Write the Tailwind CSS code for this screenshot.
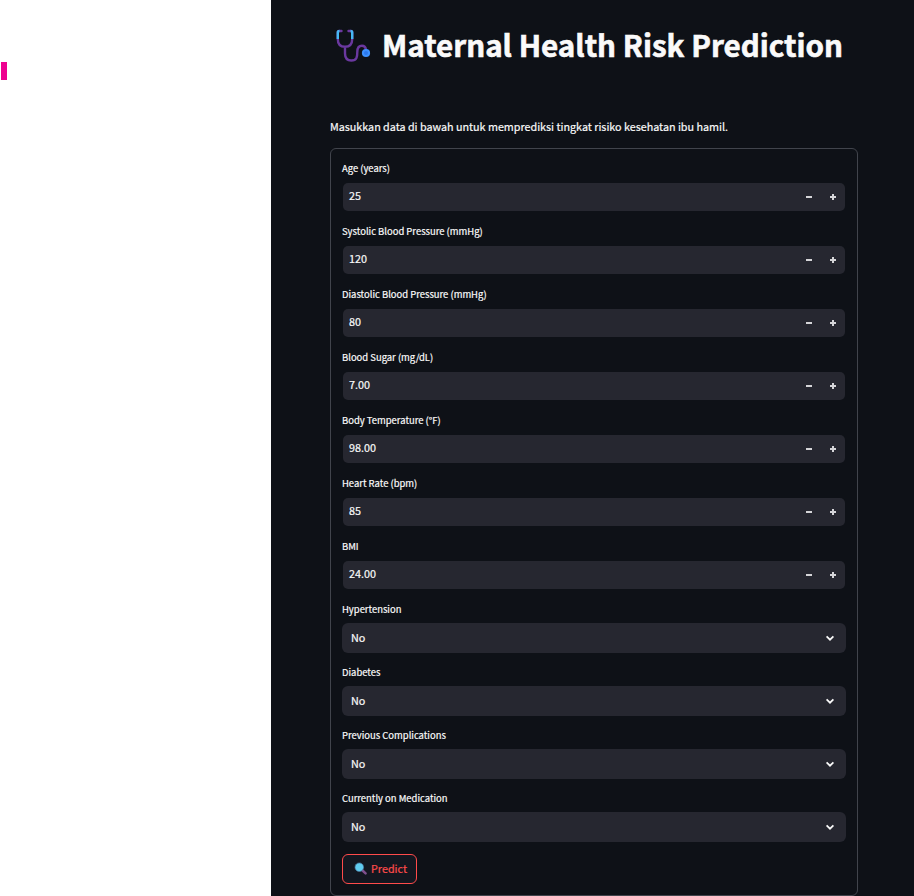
<!DOCTYPE html>
<html lang="id">
<head>
<meta charset="utf-8">
<title>Maternal Health Risk Prediction</title>
<script src="https://cdn.jsdelivr.net/npm/@tailwindcss/browser@4"></script>
</head>
<body class="w-[914px] h-[896px] overflow-hidden flex bg-white text-[#fafafa] font-['Noto_Sans_CJK_SC','Noto_Sans',sans-serif] [-webkit-text-stroke:0.2px]">
<aside class="w-[271px] shrink-0 pt-[62px] pl-px"><div class="w-[6px] h-[18px] bg-[#ee0290]"></div></aside>
<main class="w-[643px] h-[896px] bg-[#0e1117] pl-[59px]">
  <header class="flex h-[92px] items-center">
    <svg class="w-[36px] h-[36px] ml-[5px] shrink-0" viewBox="0 0 36 36" fill="none" stroke-linecap="round">
      <path d="M6.5 3H4.2Q2.8 3 2.8 4.5V11Q2.8 18.8 10 18.8T17.2 11V4.5Q17.2 3 15.8 3H13.5M10 19.5V25.5Q10 32.5 16.3 32.5C22 32.5 22.3 28.5 22.3 24C22.3 19.5 24 17.8 27 17.8Q30.4 17.8 31 21.5" stroke="#6a389f" stroke-width="2.4"/>
      <path d="M2.8 11V4.5Q2.8 3 4.5 3M17.2 11V4.5Q17.2 3 15.5 3" stroke="#45b8f4" stroke-width="2.4" stroke-linecap="butt"/>
      <circle cx="31" cy="25" r="4.1" fill="#3c91ff"/><circle cx="31" cy="25" r="2" fill="#2c78ed"/>
    </svg>
    <h1 class="ml-[11px] pb-[2px] text-[29.6px] leading-[40px] font-bold [-webkit-text-stroke:0.6px] whitespace-nowrap">Maternal Health Risk Prediction</h1>
  </header>
  <p class="mt-[26px] h-[18px] text-[10.75px] leading-[18px] whitespace-nowrap">Masukkan data di bawah untuk memprediksi tingkat risiko kesehatan ibu hamil.</p>
  <form id="form" class="mt-[12px] w-[528px] h-[748px] border border-[#41444c] rounded-[6px] pl-[11px] pr-[11px] pt-[12px] flex flex-col gap-[12px]">
    <button type="button" class="order-last shrink-0 w-[75px] h-[30px] border border-[#ff4b4b] rounded-[6px] bg-[#131720] text-[#ff4b4b] text-[10.8px] flex items-center pl-[11px] whitespace-nowrap">
      <svg class="w-[14px] h-[14px] mr-[3px]" viewBox="0 0 14 14"><path d="M8 8L11.6 11.3" stroke="#80508e" stroke-width="2.5" stroke-linecap="round"/><circle cx="5.3" cy="5.2" r="4.3" fill="#60cdf0" stroke="#4b779d" stroke-width=".7"/></svg>
      <span class="pb-[2px]">Predict</span>
    </button>
  </form>
</main>
<template id="num"><div class="h-[51px] shrink-0">
  <label class="block h-[21px] text-[9.45px] leading-[15px] whitespace-nowrap"></label>
  <div class="mx-px mt-px h-[28px] rounded-[5px] bg-[#262730] flex items-center pl-[6px] text-[10.8px] leading-[22px]">
    <span class="val flex-1 pb-[4px]"></span>
    <svg class="w-[48px] h-[28px]" viewBox="0 0 48 28" fill="#d5d5d8"><path d="M9 13h6v2H9zM33 13h6v2h-6zM35 11h2v6h-2z"/></svg>
  </div></div></template>
<template id="sel"><div class="h-[51px] shrink-0">
  <label class="block h-[21px] text-[9.45px] leading-[15px] whitespace-nowrap"></label>
  <div class="h-[30px] rounded-[6px] bg-[#262730] flex items-center pl-[9px] text-[10.8px] leading-[28px]">
    <span class="val flex-1 pb-[2px]"></span>
    <svg class="w-[32px] h-[30px]" viewBox="0 0 32 30" fill="none"><path d="M12.6 13.3L16 16.7L19.4 13.3" stroke="#fafafa" stroke-width="1.7"/></svg>
  </div></div></template>
<script>
const rows=[['Age (years)','25'],['Systolic Blood Pressure (mmHg)','120'],['Diastolic Blood Pressure (mmHg)','80'],['Blood Sugar (mg/dL)','7.00'],['Body Temperature (°F)','98.00'],['Heart Rate (bpm)','85'],['BMI','24.00'],['Hypertension','No'],['Diabetes','No'],['Previous Complications','No'],['Currently on Medication','No']];
const form=document.getElementById('form');
for(const [l,v] of rows){
  const n=document.getElementById(v==='No'?'sel':'num').content.cloneNode(true);
  n.querySelector('label').textContent=l;
  n.querySelector('.val').textContent=v;
  form.appendChild(n);
}
</script>
</body>
</html>
